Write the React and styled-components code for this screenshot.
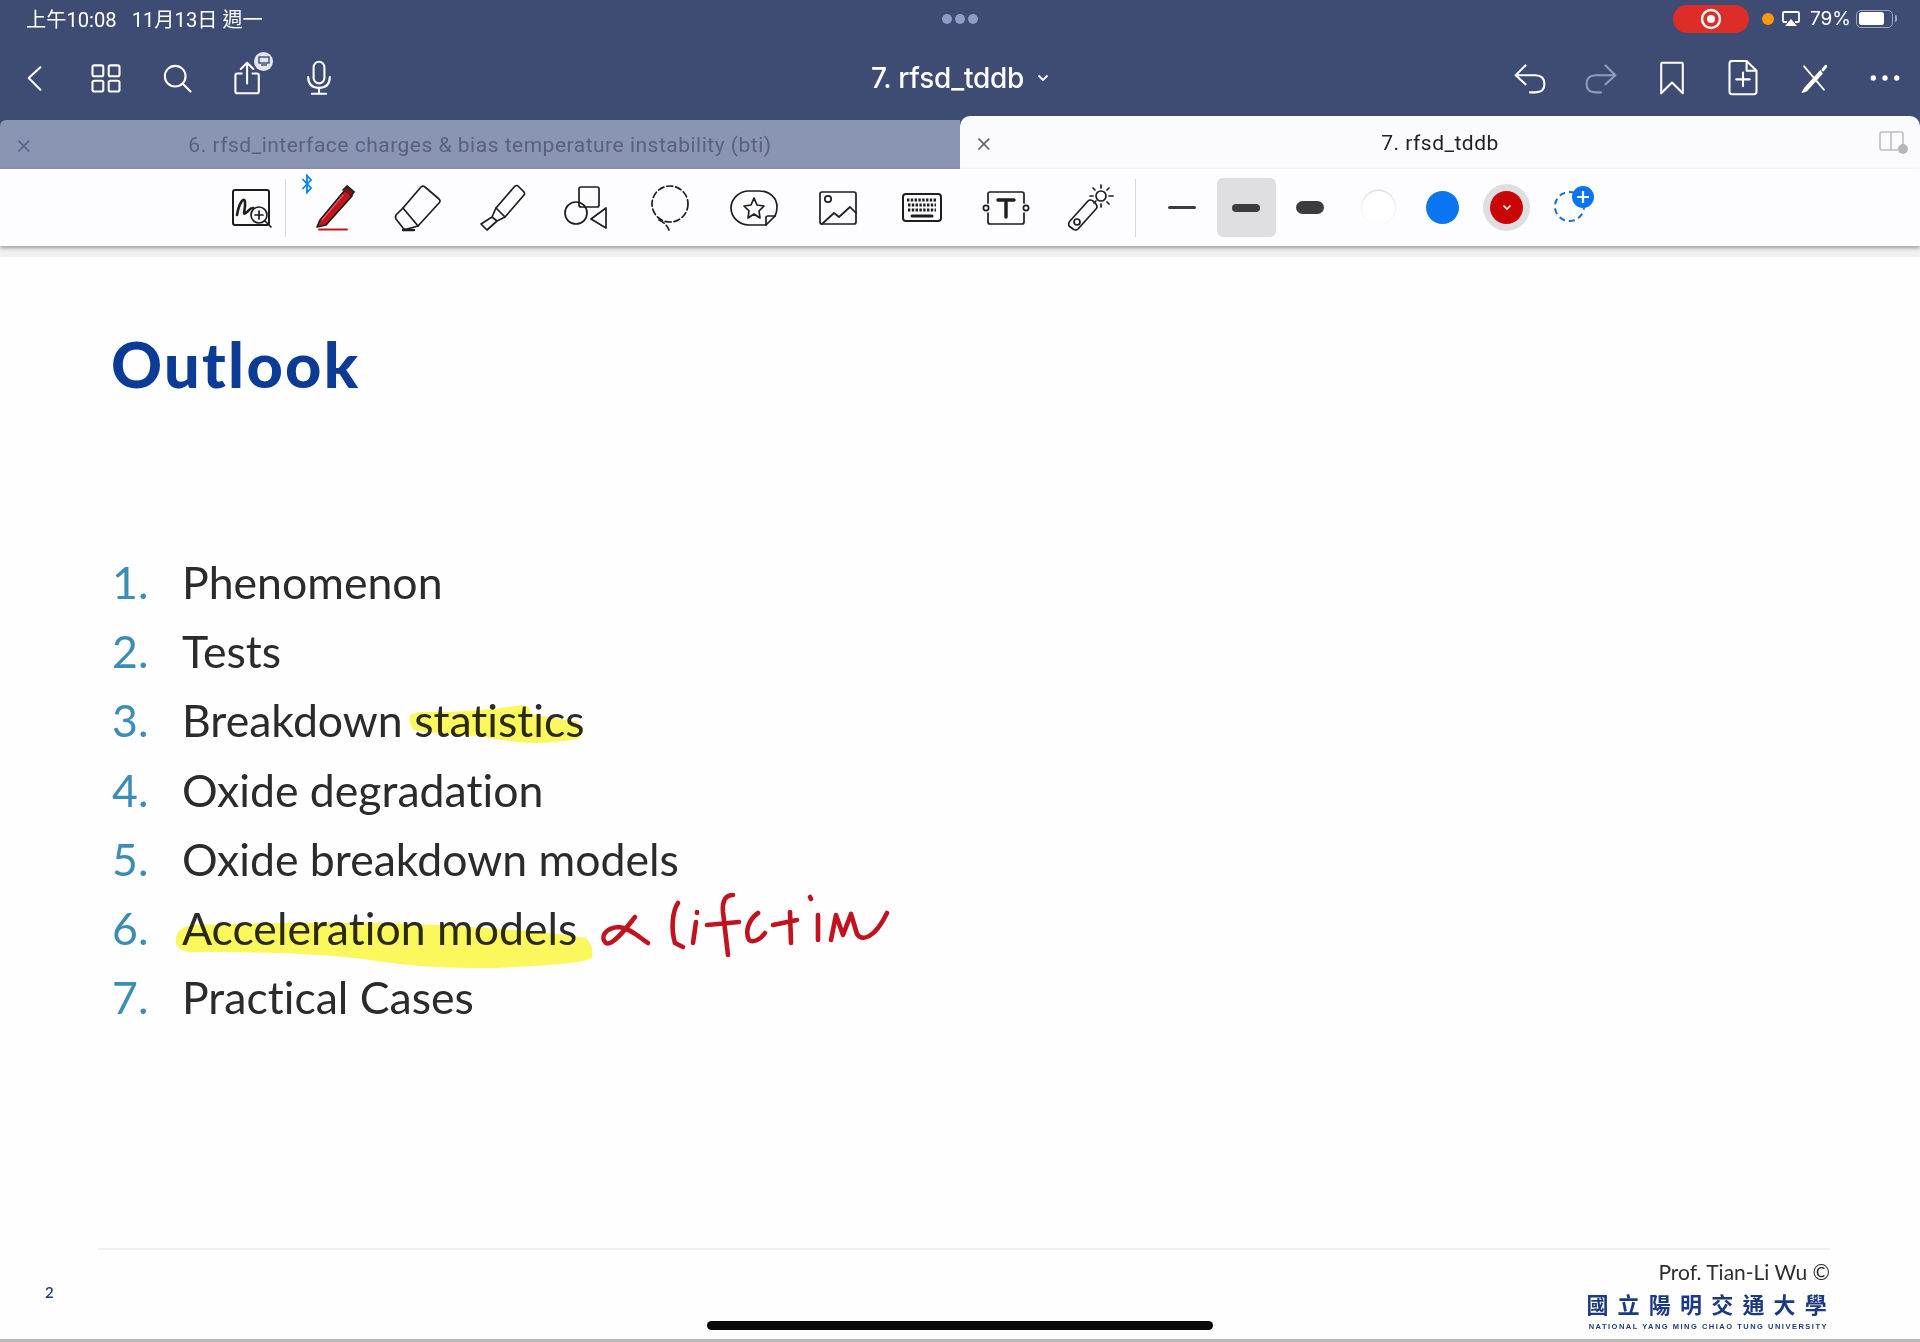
import React from "react";
import styled, { createGlobalStyle } from "styled-components";

const GlobalStyle = createGlobalStyle`
  html, body {
    margin: 0;
    padding: 0;
    background: #fff;
  }
`;

const items = [
  "Phenomenon",
  "Tests",
  "Breakdown statistics",
  "Oxide degradation",
  "Oxide breakdown models",
  "Acceleration models",
  "Practical Cases",
];

const Back = () => (
  <HeaderSvg viewBox="0 0 40 40"><path d="M26 8 L13 20 L26 33" /></HeaderSvg>
);
const Grid = () => (
  <HeaderSvg viewBox="0 0 40 40">
    <rect x="5" y="6" width="12" height="12" rx="2" />
    <rect x="23" y="6" width="12" height="12" rx="2" />
    <rect x="5" y="23" width="12" height="12" rx="2" />
    <rect x="23" y="23" width="12" height="12" rx="2" />
  </HeaderSvg>
);
const Search = () => (
  <HeaderSvg viewBox="0 0 40 40">
    <circle cx="18" cy="18" r="11.5" />
    <path d="M26.5 26.5 L35 35" />
  </HeaderSvg>
);
const Share = () => (
  <HeaderSvg viewBox="0 0 40 40">
    <path d="M13 15 H8 Q6 15 6 17 V35 Q6 37 8 37 H30 Q32 37 32 35 V17 Q32 15 30 15 H25" />
    <path d="M19 26 V3 M12 10 L19 3 L26 10" />
  </HeaderSvg>
);
const Mic = () => (
  <HeaderSvg viewBox="0 0 40 40">
    <rect x="14" y="2" width="12" height="24" rx="6" />
    <path d="M8 19 Q8 31 20 31 Q32 31 32 19 M20 31 V37 M12 37.5 H28" />
  </HeaderSvg>
);
const Undo = () => (
  <HeaderSvg viewBox="0 0 40 40">
    <path d="M15 6 L4 17 L15 27 M4 17 H26 Q36 17 36 27 Q36 36 26 36 H20" />
  </HeaderSvg>
);
const Redo = () => (
  <HeaderSvg viewBox="0 0 40 40" $muted>
    <path d="M25 6 L36 17 L25 27 M36 17 H14 Q4 17 4 27 Q4 36 14 36 H20" />
  </HeaderSvg>
);
const Bookmark = () => (
  <HeaderSvg viewBox="0 0 40 40">
    <path d="M9 3 H31 Q32 3 32 5 V37 L20 25 L8 37 V5 Q8 3 9 3 Z" />
  </HeaderSvg>
);
const AddPage = () => (
  <HeaderSvg viewBox="0 0 40 40">
    <path d="M8 1 H24 L35 12 V35 Q35 38 32 38 H8 Q5 38 5 35 V4 Q5 1 8 1 Z M24 1 V12 H35 M20 14 V29 M12.5 21.5 H27.5" />
  </HeaderSvg>
);
const CrossedTools = () => (
  <HeaderSvg viewBox="0 0 40 40">
    <path d="M9 7 L31 33" strokeWidth="2" />
    <path d="M27 12 L10 31 L7 36 L12 34 L29 15 Z" fill="#fff" strokeWidth="1.4" />
    <path d="M30 11 L33 7" strokeWidth="3.4" />
  </HeaderSvg>
);
const DotsIcon = () => (
  <HeaderSvg viewBox="0 0 40 40">
    <circle cx="7" cy="20" r="3" fill="#fff" stroke="none" />
    <circle cx="20" cy="20" r="3" fill="#fff" stroke="none" />
    <circle cx="33" cy="20" r="3" fill="#fff" stroke="none" />
  </HeaderSvg>
);

const Signature = () => (
  <ToolSvg viewBox="0 0 48 48">
    <rect x="5" y="6" width="36" height="35" rx="2" strokeWidth="2" />
    <path d="M9 31 C11 19 16 12 17 18 C18 26 13 33 19 28 C21 26 22 24 25 24" strokeWidth="2.6" />
    <circle cx="31" cy="31" r="8" fill="#fdfcfe" />
    <path d="M31 27 V35 M27 31 H35 M37 37 L43 43" />
  </ToolSvg>
);
const Pen = () => (
  <ToolSvg viewBox="0 0 48 48">
    <path d="M10 36 L35 6 L42 12 L16 41 L7 43 Z" fill="#c1151c" />
    <path d="M33 6 L37 2 L44 8 L41 12" fill="#7d1216" />
    <path d="M12 36 L33 11" stroke="#e56" strokeWidth="1.2" />
    <path d="M9 45.5 H37" stroke="#c1151c" strokeWidth="1.8" />
  </ToolSvg>
);
const Eraser = () => (
  <ToolSvg viewBox="0 0 48 48">
    <path d="M9 24 L27 3 Q29 1 31 3 L45 15 Q47 17 45 19 L24 42 Z" />
    <path d="M9 24 L2 31 Q1 33 2 35 L9 44 Q11 46 13 45 L24 42" />
    <path d="M9 46 H20" strokeWidth="2.4" />
  </ToolSvg>
);
const Highlighter = () => (
  <ToolSvg viewBox="0 0 48 48">
    <path d="M18 24 L37 2 Q39 1 40 2 L46 8 Q47 10 46 11 L27 33 Z" />
    <path d="M18 24 L14 33 L19 37 L27 33 M14 33 L3 40 L9 46 L19 37" />
  </ToolSvg>
);
const Shapes = () => (
  <ToolSvg viewBox="0 0 48 48">
    <rect x="17" y="3" width="20" height="20" rx="2" />
    <circle cx="14" cy="29" r="11" />
    <path d="M44 24 V44 L29 35 Z" />
  </ToolSvg>
);
const Lasso = () => (
  <ToolSvg viewBox="0 0 48 48">
    <circle cx="24" cy="20" r="18" strokeDasharray="6 3" />
    <path d="M13 36 Q20 39 23 46" strokeDasharray="6 3" />
  </ToolSvg>
);
const Sticker = () => (
  <ToolSvg viewBox="0 0 48 48">
    <path d="M19 7 H29 C40 7 47 14 47 23 C47 27 46 30 45 32 L36 41 H19 C9 41 1 33 1 24 C1 15 9 7 19 7 Z" />
    <path d="M45 32 H38 Q36 32 36 34 V41" />
    <path d="M24 14 L27 21 L34 22 L29 27 L30 34 L24 30 L18 34 L19 27 L14 22 L21 21 Z" />
  </ToolSvg>
);
const ImageIcon = () => (
  <ToolSvg viewBox="0 0 48 48">
    <rect x="6" y="8" width="36" height="32" rx="2" />
    <circle cx="14" cy="15" r="3.2" />
    <path d="M8 40 L20 29 L25 33 L36 23 L42 29" />
  </ToolSvg>
);
const Keyboard = () => (
  <ToolSvg viewBox="0 0 48 48">
    <rect x="5" y="10" width="38" height="27" rx="3" strokeWidth="2" />
    <g strokeLinecap="butt">
      <path d="M9 16 H39 M10 21 H38 M10 26 H38" strokeDasharray="2.4 1.4" strokeWidth="2.8" />
    </g>
    <path d="M14 32 H34" strokeWidth="3" />
  </ToolSvg>
);
const TextBox = () => (
  <ToolSvg viewBox="0 0 48 48">
    <path d="M6 19 V10 Q6 8 8 8 H40 Q42 8 42 10 V19 M6 29 V38 Q6 40 8 40 H40 Q42 40 42 38 V29" />
    <circle cx="4" cy="24" r="2.6" />
    <circle cx="44" cy="24" r="2.6" />
    <path d="M16 16 H32 M24 16 V33" strokeWidth="3.4" />
  </ToolSvg>
);
const Laser = () => (
  <ToolSvg viewBox="0 0 48 48">
    <path d="M4 37 L22 17 Q24 15 27 17 L30 20 Q32 23 30 25 L12 45 Q10 47 7 45 L3 42 Q2 39 4 37 Z" />
    <circle cx="11" cy="38" r="3" />
    <circle cx="35" cy="12" r="5" />
    <path d="M35 1 V4 M35 20 V23 M24 12 H27 M43 12 H47 M27 4 L29 6 M43 4 L41 6 M41 18 L43 20 M28 19 L30 17" />
  </ToolSvg>
);

const toolIcons = [Pen, Eraser, Highlighter, Shapes, Lasso, Sticker, ImageIcon, Keyboard, TextBox, Laser];

const App = () => {
  return (
    <Page>
      <GlobalStyle />
      <Header>
        <StatusBar>
          <StatusTime>{"上午10:08   11月13日 週一"}</StatusTime>
          <CenterDots>
            <i />
            <i />
            <i />
          </CenterDots>
          <StatusRight>
            <RecordPill>
              <svg width="22" height="22" viewBox="0 0 22 22">
                <circle cx="11" cy="11" r="9" fill="none" stroke="#fff" strokeWidth="2.4" />
                <circle cx="11" cy="11" r="4" fill="#fff" />
              </svg>
            </RecordPill>
            <OrangeDot />
            <svg width="18" height="16" viewBox="0 0 18 16">
              <path d="M5 11 H2 Q1 11 1 10 V2 Q1 1 2 1 H16 Q17 1 17 2 V10 Q17 11 16 11 H13" fill="none" stroke="#fff" strokeWidth="1.8" />
              <path d="M9 8 L15 15 H3 Z" fill="#fff" />
            </svg>
            <BatteryText>79%</BatteryText>
            <Battery>
              <BatteryFill />
            </Battery>
          </StatusRight>
        </StatusBar>
        <Toolbar>
          <IconGroup>
            <IconSlot><Back /></IconSlot>
            <IconSlot><Grid /></IconSlot>
            <IconSlot><Search /></IconSlot>
            <IconSlot>
              <Share />
              <ShareBadge>
                <svg width="12" height="10" viewBox="0 0 12 10">
                  <rect x="1" y="1" width="10" height="6" fill="none" stroke="#3e4c73" strokeWidth="1.4" />
                  <path d="M3 9 H9" stroke="#3e4c73" strokeWidth="1.4" />
                </svg>
              </ShareBadge>
            </IconSlot>
            <IconSlot><Mic /></IconSlot>
          </IconGroup>
          <DocTitle>
            7. rfsd_tddb
            <svg width="12" height="8" viewBox="0 0 12 8">
              <path d="M1.5 1.5 L6 6 L10.5 1.5" fill="none" stroke="#fff" strokeWidth="1.8" />
            </svg>
          </DocTitle>
          <IconGroup $end>
            <IconSlot><Undo /></IconSlot>
            <IconSlot><Redo /></IconSlot>
            <IconSlot><Bookmark /></IconSlot>
            <IconSlot><AddPage /></IconSlot>
            <IconSlot><CrossedTools /></IconSlot>
            <IconSlot><DotsIcon /></IconSlot>
          </IconGroup>
        </Toolbar>
      </Header>

      <TabBar>
        <Tab>
          <TabClose>×</TabClose>
          6. rfsd_interface charges &amp; bias temperature instability (bti)
        </Tab>
        <Tab $active>
          <TabClose $active>×</TabClose>
          7. rfsd_tddb
          <SplitIcon>
            <svg width="30" height="24" viewBox="0 0 30 24">
              <path d="M24 17 V3 Q24 1 22 1 H3 Q1 1 1 3 V17 Q1 19 3 19 H19 M12 1 V19" fill="none" stroke="#bdbdc2" strokeWidth="1.6" />
              <circle cx="24" cy="18" r="5" fill="#b5b5ba" />
            </svg>
          </SplitIcon>
        </Tab>
      </TabBar>

      <ToolRow>
        <ToolSlot><Signature /></ToolSlot>
        <Divider />
        {toolIcons.map((Icon, i) => (
          <ToolSlot key={i}>
            {i === 0 && (
              <BluetoothMark viewBox="0 0 12 20">
                <path d="M1.5 5 L10 14 L6 18.5 V1.5 L10 6 L1.5 15" />
              </BluetoothMark>
            )}
            <Icon />
          </ToolSlot>
        ))}
        <Divider $gap />
        <PaletteSlot>
          <StrokeLine $h={3} />
        </PaletteSlot>
        <PaletteSlot $selected>
          <StrokeLine $h={8} />
        </PaletteSlot>
        <PaletteSlot>
          <StrokeLine $h={13} />
        </PaletteSlot>
        <PaletteSlot $first>
          <Swatch $color="#ffffff" $ring />
        </PaletteSlot>
        <PaletteSlot>
          <Swatch $color="#0a75f0" />
        </PaletteSlot>
        <PaletteSlot>
          <RedHalo>
            <Swatch $color="#c90505">
              <svg width="10" height="7" viewBox="0 0 10 7">
                <path d="M1.5 1.5 L5 5 L8.5 1.5" fill="none" stroke="#fff" strokeWidth="1.6" />
              </svg>
            </Swatch>
          </RedHalo>
        </PaletteSlot>
        <PaletteSlot>
          <AddColor>
            <AddBadge>
              <svg width="16" height="16" viewBox="0 0 16 16">
                <path d="M8 2 V14 M2 8 H14" stroke="#fff" strokeWidth="2.2" />
              </svg>
            </AddBadge>
          </AddColor>
        </PaletteSlot>
      </ToolRow>
      <ToolShadow />

      <Slide>
        <SlideTitle>Outlook</SlideTitle>
        <OutlineList>
          {items.map((text, i) => (
            <OutlineRow key={text}>
              <RowNumber>{i + 1}.</RowNumber>
              <RowText>{text}</RowText>
            </OutlineRow>
          ))}
        </OutlineList>
        <SlideFooter>
          <PageNumber>2</PageNumber>
          <Credit>
            <Prof>Prof. Tian-Li Wu ©</Prof>
            <UniName>國立陽明交通大學</UniName>
            <UniEnglish>NATIONAL YANG MING CHIAO TUNG UNIVERSITY</UniEnglish>
          </Credit>
        </SlideFooter>
      </Slide>

      {/* pen and highlighter marks drawn over the slide */}
      <InkLayer viewBox="0 0 1920 1342">
        <path
          fill="#fbf95c"
          d="M410 716 Q412 711 440 712 C470 712 500 708 524 705 Q532 708 530 714 L578 722 Q584 730 580 738 C550 745 520 744 490 738 C460 733 430 734 414 730 Q408 724 410 716 Z"
        />
        <path
          fill="#fbf95c"
          d="M176 938 Q178 926 195 925 C280 922 380 922 440 925 C490 928 550 932 586 938 Q594 946 592 958 Q580 964 530 966 C470 970 420 968 370 960 C320 953 250 952 190 952 Q174 950 176 938 Z"
        />
        <g stroke="#c2121f" strokeWidth="4.6" strokeLinecap="round" strokeLinejoin="round" fill="none">
          <path d="M635 917 C625 930 612 946 606 943 C600 938 604 928 619 927 C630 928 640 938 648 943" />
          <path d="M678 903 C672 912 671 930 675 943 L683 947" />
          <path d="M696 922 L693 943 M697 912 L697 913" />
          <path d="M733 895 C726 895 722 900 723 912 L728 955 M707 925 L739 922" />
          <path d="M758 913 C748 920 745 932 749 940 C753 943 760 940 765 933" />
          <path d="M773 925 L797 920 M790 912 L791 943" />
          <path d="M818 915 L818 940 M810 897 L811 899" />
          <path d="M831 940 L836 915 L843 935 L851 914 L857 934 C862 942 875 938 887 913" />
        </g>
      </InkLayer>

      <HomeBar />
    </Page>
  );
};

export default App;

const Page = styled.div`
  position: relative;
  width: 1920px;
  height: 1342px;
  overflow: hidden;
  display: flex;
  flex-direction: column;
  background: #fff;
  font-family: Inter, "Noto Sans CJK TC", sans-serif;
  border-bottom: 3px solid #b8b8b8;
  box-sizing: border-box;
`;

const Header = styled.header`
  background: #3e4c73;
  height: 116px;
  flex: none;
  color: #fff;
`;

const StatusBar = styled.div`
  height: 37px;
  display: grid;
  grid-template-columns: 1fr auto 1fr;
  align-items: center;
  padding: 0 27px 1px 26px;
`;

const StatusTime = styled.span`
  font: 400 20.2px Roboto, "Noto Sans CJK TC", sans-serif;
  white-space: pre;
`;

const CenterDots = styled.div`
  display: flex;
  gap: 3px;

  i {
    width: 10px;
    height: 10px;
    border-radius: 50%;
    background: #8f9cc8;
  }
`;

const StatusRight = styled.div`
  justify-self: end;
  display: flex;
  align-items: center;
`;

const RecordPill = styled.div`
  width: 76px;
  height: 28px;
  border-radius: 14px;
  background: #dc2d28;
  display: flex;
  align-items: center;
  justify-content: center;
  margin-right: 13px;
`;

const OrangeDot = styled.div`
  width: 12px;
  height: 12px;
  border-radius: 50%;
  background: #f99a0e;
  margin-right: 8px;
`;

const BatteryText = styled.span`
  font-size: 19px;
  margin: 0 5px 0 10px;
`;

const Battery = styled.div`
  position: relative;
  width: 37px;
  height: 18px;
  border: 1.5px solid #9aa4c4;
  border-radius: 5px;
  padding: 1.5px;
  box-sizing: border-box;

  &::after {
    content: "";
    position: absolute;
    right: -5px;
    top: 4px;
    width: 2px;
    height: 7px;
    background: #9aa4c4;
    border-radius: 0 2px 2px 0;
  }
`;

const BatteryFill = styled.div`
  width: 79%;
  height: 100%;
  background: #fff;
  border-radius: 2.5px;
`;

const Toolbar = styled.div`
  height: 79px;
  display: grid;
  grid-template-columns: 1fr auto 1fr;
  align-items: center;
`;

const IconGroup = styled.div`
  display: flex;
  justify-self: ${(p) => (p.$end ? "end" : "start")};
  margin-left: ${(p) => (p.$end ? "0" : "-1px")};
`;

const IconSlot = styled.div`
  position: relative;
  width: 71px;
  height: 44px;
  display: flex;
  align-items: center;
  justify-content: center;
`;

const HeaderSvg = styled.svg`
  width: 36px;
  height: 36px;
  fill: none;
  stroke: ${(p) => (p.$muted ? "#8f9ab8" : "#ffffff")};
  stroke-width: 2.3;
  stroke-linecap: round;
  stroke-linejoin: round;
`;

const ShareBadge = styled.div`
  position: absolute;
  top: -4px;
  left: 42px;
  width: 19px;
  height: 19px;
  border-radius: 50%;
  background: #e4e6ee;
  display: flex;
  align-items: center;
  justify-content: center;
`;

const DocTitle = styled.div`
  display: flex;
  align-items: center;
  gap: 13px;
  font: 500 28px Inter, sans-serif;
  letter-spacing: -0.25px;
  color: #fff;
`;

const TabBar = styled.div`
  height: 53px;
  flex: none;
  display: flex;
  align-items: flex-end;
  background: #3e4c73;
`;

const Tab = styled.div`
  position: relative;
  width: 960px;
  height: ${(p) => (p.$active ? "53px" : "49px")};
  display: flex;
  align-items: center;
  justify-content: center;
  box-sizing: border-box;
  background: ${(p) => (p.$active ? "#fbfafc" : "#8a94b3")};
  color: ${(p) => (p.$active ? "#222" : "#59617f")};
  border-radius: ${(p) => (p.$active ? "10px 10px 0 0" : "6px 0 0 0")};
  font: 400 21px Roboto, sans-serif;
  letter-spacing: 0.5px;
`;

const TabClose = styled.span`
  position: absolute;
  left: 15px;
  font: 300 27px Inter, sans-serif;
  color: ${(p) => (p.$active ? "#666" : "#5b6484")};
`;

const SplitIcon = styled.span`
  position: absolute;
  right: 11px;
  top: 15px;
  line-height: 0;
`;

const ToolRow = styled.div`
  position: relative;
  z-index: 1;
  height: 77px;
  flex: none;
  display: flex;
  align-items: center;
  padding-left: 210px;
  background: #fdfcfe;
  box-shadow: 0 2px 4px rgba(0, 0, 0, 0.35);
`;

const ToolSlot = styled.div`
  position: relative;
  width: 84px;
  display: flex;
  justify-content: center;
`;

const ToolSvg = styled.svg`
  width: 48px;
  height: 48px;
  fill: none;
  stroke: #1e1e1e;
  stroke-width: 1.7;
  stroke-linecap: round;
  stroke-linejoin: round;
`;

const BluetoothMark = styled.svg`
  position: absolute;
  left: 9px;
  top: -10px;
  width: 12px;
  height: 20px;
  fill: none;
  stroke: #0a84e8;
  stroke-width: 1.8;
`;

const Divider = styled.div`
  width: 1px;
  height: 58px;
  background: #d8d8dc;
  margin-left: ${(p) => (p.$gap ? "3px" : "-9px")};
  margin-right: ${(p) => (p.$gap ? "14px" : "6px")};
`;

const PaletteSlot = styled.div`
  position: relative;
  width: 64px;
  height: 59px;
  display: flex;
  align-items: center;
  justify-content: center;
  margin-left: ${(p) => (p.$first ? "4.5px" : "0")};

  ${(p) =>
    p.$selected &&
    `&::before {
      content: "";
      position: absolute;
      inset: 0 2.5px;
      background: #dfdfe2;
      border-radius: 6px;
    }`}
`;

const StrokeLine = styled.div`
  position: relative;
  width: 28px;
  height: ${(p) => p.$h}px;
  border-radius: ${(p) => p.$h / 2}px;
  background: #3c3c40;
`;

const Swatch = styled.div`
  width: 33px;
  height: 33px;
  border-radius: 50%;
  background: ${(p) => p.$color};
  box-shadow: ${(p) => (p.$ring ? "0 -1px 2px rgba(0,0,0,0.18)" : "none")};
  display: flex;
  align-items: center;
  justify-content: center;
`;

const RedHalo = styled.div`
  width: 47px;
  height: 47px;
  border-radius: 50%;
  background: #dfdfe1;
  display: flex;
  align-items: center;
  justify-content: center;
`;

const AddColor = styled.div`
  position: relative;
  width: 31px;
  height: 31px;
  top: -1px;
  left: -1px;
  border: 2px dashed #1d6fc4;
  border-radius: 50%;
  box-sizing: border-box;
`;

const AddBadge = styled.div`
  position: absolute;
  top: -7px;
  right: -11px;
  width: 22px;
  height: 22px;
  border-radius: 50%;
  background: #0a75f0;
  display: flex;
  align-items: center;
  justify-content: center;
`;

const ToolShadow = styled.div`
  height: 11px;
  flex: none;
  background: #f0f0f1;
`;

const Slide = styled.main`
  flex: 1;
  display: flex;
  flex-direction: column;
  font-family: Lato, sans-serif;
  background: #fefefe;
`;

const SlideTitle = styled.h1`
  margin: 71px 0 0 111px;
  font: 900 63px/72px Lato, sans-serif;
  letter-spacing: 2.3px;
  color: #0b3b95;
`;

const OutlineList = styled.ol`
  list-style: none;
  margin: 147px 0 0 0;
  padding: 0 0 0 112px;
`;

const OutlineRow = styled.li`
  height: 69.2px;
  display: flex;
  align-items: center;
  font-size: 44.6px;
  line-height: 69px;
  font-variant-ligatures: none;
`;

const RowNumber = styled.span`
  width: 28px;
  text-align: right;
  margin-right: 42px;
  color: #3b8db5;
`;

const RowText = styled.span`
  color: #2b2b2d;
`;

const SlideFooter = styled.footer`
  margin: auto 90px 0 98px;
  border-top: 2px solid #eeeeef;
  height: 89px;
  display: flex;
  justify-content: space-between;
  flex: none;
`;

const PageNumber = styled.span`
  margin: 33px 0 0 -53px;
  font: 600 15px Lato, sans-serif;
  color: #1a3a7a;
`;

const Credit = styled.div`
  display: flex;
  flex-direction: column;
  align-items: flex-end;
`;

const Prof = styled.span`
  margin-top: 8.5px;
  font: 400 21px/26px Lato, sans-serif;
  color: #2d2d2f;
`;

const UniName = styled.span`
  margin-top: 5px;
  font: 600 22px/26px "Noto Sans CJK TC", sans-serif;
  letter-spacing: 9.2px;
  margin-right: -6px;
  color: #1c3a80;
`;

const UniEnglish = styled.span`
  margin-top: 6px;
  font: 700 7.5px/9px "Liberation Sans", sans-serif;
  letter-spacing: 1.5px;
  margin-right: 2px;
  color: #1c3a80;
  white-space: nowrap;
`;

const InkLayer = styled.svg`
  position: absolute;
  inset: 0;
  width: 1920px;
  height: 1342px;
  pointer-events: none;
  mix-blend-mode: multiply;
`;

const HomeBar = styled.div`
  position: absolute;
  left: 707px;
  top: 1321px;
  width: 506px;
  height: 9px;
  border-radius: 5px;
  background: #0a0a0a;
`;
